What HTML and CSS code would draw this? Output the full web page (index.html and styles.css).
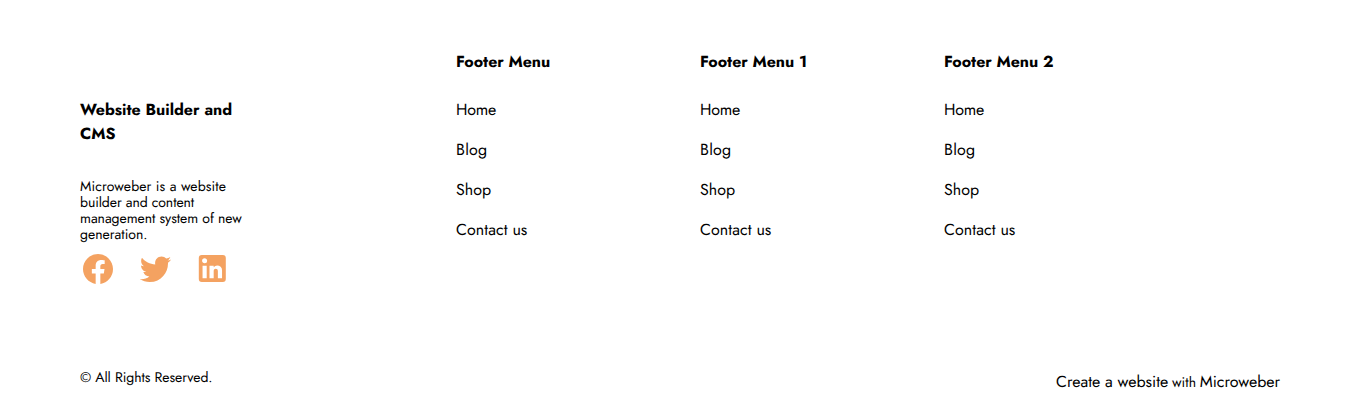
FILE: index.html
```html
<!DOCTYPE html>
<html lang="en">
<head>
<meta charset="utf-8">
<title>Website Builder and CMS</title>
<link rel="stylesheet" href="styles.css">
</head>
<body>
<footer class="footer">
  <div class="columns">
    <section class="about">
      <h2 class="title">Website Builder and<br>CMS</h2>
      <p class="description"><span class="line-wide">Microweber is a website</span><br><span class="line-tight">builder and content</span><br><span class="line-snug">management system of new</span><br>generation.</p>
      <div class="social">
        <svg class="icon" viewBox="0 0 24 24"><path d="M12 2.04C6.5 2.04 2 6.53 2 12.06C2 17.06 5.66 21.21 10.44 21.96V14.96H7.9V12.06H10.44V9.85C10.44 7.34 11.93 5.96 14.22 5.96C15.31 5.96 16.45 6.15 16.45 6.15V8.62H15.19C13.95 8.62 13.56 9.39 13.56 10.18V12.06H16.34L15.89 14.96H13.56V21.96A10 10 0 0 0 22 12.06C22 6.53 17.5 2.04 12 2.04Z"/></svg>
        <svg class="icon" viewBox="-0.33 0.33 24 24"><path d="M22.46,6C21.69,6.35 20.86,6.58 20,6.69C20.88,6.16 21.56,5.32 21.88,4.31C21.05,4.81 20.13,5.16 19.16,5.36C18.37,4.5 17.26,4 16,4C13.65,4 11.73,5.92 11.73,8.29C11.73,8.63 11.77,8.96 11.84,9.27C8.28,9.09 5.11,7.38 3,4.79C2.63,5.42 2.42,6.16 2.42,6.94C2.42,8.43 3.17,9.75 4.33,10.5C3.62,10.5 2.96,10.3 2.38,10V10.03C2.38,12.11 3.86,13.85 5.82,14.24C5.46,14.34 5.08,14.39 4.69,14.39C4.42,14.39 4.15,14.36 3.89,14.31C4.43,16 6,17.26 7.89,17.29C6.43,18.45 4.58,19.13 2.56,19.13C2.22,19.13 1.88,19.11 1.54,19.07C3.44,20.29 5.7,21 8.12,21C16,21 20.33,14.46 20.33,8.79C20.33,8.6 20.33,8.42 20.32,8.23C21.16,7.63 21.88,6.87 22.46,6Z"/></svg>
        <svg class="icon" viewBox="-0.2 0.33 24 24"><path d="M19 3A2 2 0 0 1 21 5V19A2 2 0 0 1 19 21H5A2 2 0 0 1 3 19V5A2 2 0 0 1 5 3H19M18.5 18.5V13.2A3.26 3.26 0 0 0 15.24 9.94C14.39 9.94 13.4 10.46 12.92 11.24V10.13H10.13V18.5H12.92V13.57C12.92 12.8 13.54 12.17 14.31 12.17A1.4 1.4 0 0 1 15.71 13.57V18.5H18.5M6.88 8.56A1.68 1.68 0 0 0 8.56 6.88C8.56 5.95 7.81 5.19 6.88 5.19A1.69 1.69 0 0 0 5.19 6.88C5.19 7.81 5.95 8.56 6.88 8.56M8.27 18.5V10.13H5.5V18.5H8.27Z"/></svg>
      </div>
    </section>
    <nav class="menu">
      <h2 class="title">Footer Menu</h2>
      <a class="link home">Home</a><a class="link blog">Blog</a><a class="link">Shop</a><a class="link contact">Contact us</a>
    </nav>
    <nav class="menu">
      <h2 class="title">Footer Menu 1</h2>
      <a class="link home">Home</a><a class="link blog">Blog</a><a class="link">Shop</a><a class="link contact">Contact us</a>
    </nav>
    <nav class="menu">
      <h2 class="title">Footer Menu 2</h2>
      <a class="link home">Home</a><a class="link blog">Blog</a><a class="link">Shop</a><a class="link contact">Contact us</a>
    </nav>
  </div>
  <div class="bottom">
    <p class="copyright">© All Rights Reserved.</p>
    <p class="credit"><span>Create a website</span><span class="with">with</span><span>Microweber</span></p>
  </div>
</footer>
</body>
</html>
```
FILE: styles.css
```css
* { box-sizing: border-box; }
body { margin: 0; background: #fff; color: #000; font-family: Jost, Lato, sans-serif; text-rendering: geometricPrecision; }
h2, p { margin: 0; }
.footer { height: 402px; padding: 51px 80px 0; overflow: hidden; }
.columns { display: grid; grid-template-columns: 376px 244px 244px 244px; height: 317px; }
.about { padding-top: 48px; }
.title { font-size: 16px; line-height: 24px; font-weight: 700; white-space: nowrap; letter-spacing: -0.05px; }
.about .title { letter-spacing: -0.01px; }
.description { margin-top: 32px; font-size: 14px; line-height: 16px; white-space: nowrap; }
.line-wide { letter-spacing: 0.13px; }
.line-tight { letter-spacing: -0.08px; }
.line-snug { letter-spacing: -0.04px; }
.social { display: flex; gap: 21px; margin-top: 8px; }
.icon { display: block; width: 36px; height: 36px; fill: #f4a261; }
.menu { display: flex; flex-direction: column; }
.menu .title { margin-bottom: 24px; }
.link { font-size: 16px; line-height: 24px; margin-bottom: 16px; }
.home { letter-spacing: -0.2px; }
.blog { letter-spacing: 0.2px; }
.contact { letter-spacing: 0.06px; }
.bottom { display: flex; justify-content: space-between; }
.copyright { font-size: 14px; line-height: 20px; letter-spacing: -0.06px; }
.credit { display: flex; align-items: baseline; gap: 3.6px; margin-top: 3px; font-size: 16px; line-height: 24px; }
.with { font-size: 14px; letter-spacing: 0.1px; }
```
